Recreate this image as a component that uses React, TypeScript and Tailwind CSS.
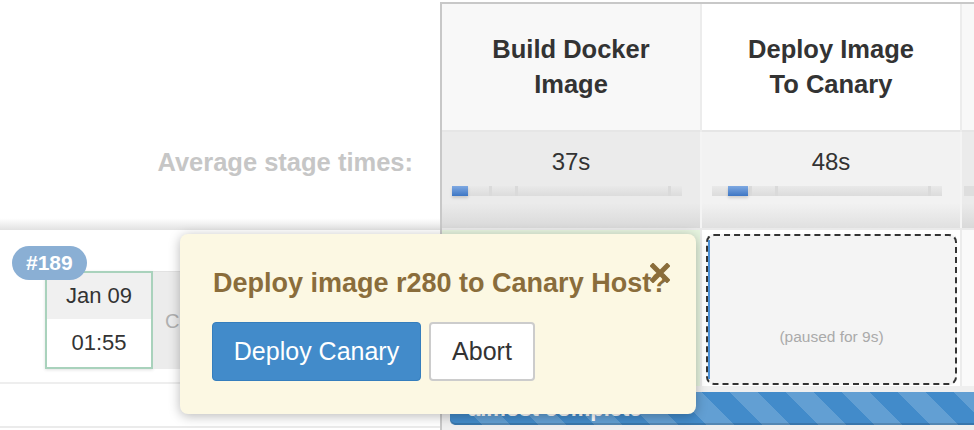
import React from "react";

function HeaderCell({ cls, children }: { cls: string; children: React.ReactNode }) {
  return (
    <div
      className={
        "h-full border-b-2 border-b-[#e6e6e6] flex items-center justify-center text-center font-bold text-[25.5px] leading-[35px] text-[#333] " +
        cls
      }
    >
      <div>{children}</div>
    </div>
  );
}

function AvgBar({ blueLeft, blueWidth }: { blueLeft: number; blueWidth: number }) {
  return (
    <div className="relative mt-[10px] ml-[10px] w-[230px] h-[10px] bg-[linear-gradient(to_bottom,#e9e9e9,#dcdcdc)]">
      <div className="absolute top-0 bottom-0 left-[37px] w-[3px] bg-[#dadada]" />
      <div className="absolute top-0 bottom-0 left-[63px] w-[3px] bg-[#dadada]" />
      <div className="absolute top-0 bottom-0 left-[216px] w-[3px] bg-[#dadada]" />
      <div
        className="absolute top-0 bottom-0 bg-[linear-gradient(to_bottom,#7fa9e2,#3d76c4)] shadow-[0_2px_3px_rgba(0,0,0,0.15)]"
        style={{ left: blueLeft, width: blueWidth }}
      />
    </div>
  );
}

export default function App() {
  return (
    <div className="relative w-[974px] h-[430px] overflow-hidden bg-white font-['Liberation_Sans',Arial,sans-serif] text-[#333]">
      <div className="flex h-[430px]">
        {/* Left panel */}
        <div className="w-[440px] flex flex-col">
          <div className="h-[132px]" />
          <div className="h-[98px] bg-[linear-gradient(to_bottom,#ffffff_88%,#e2e2e2)] flex justify-end pr-[27px] pt-[15px]">
            <span className="text-[25.5px] leading-[30px] font-bold text-[#c6c6c6]">Average stage times:</span>
          </div>
          <div className="relative h-[154px] border-b-2 border-[#eeeeee] pl-[45px] pt-[41px]">
            <div className="flex h-[98px]">
              <div className="w-[108px] h-[98px] border-2 border-[#a9d2bc] flex flex-col bg-white shadow-[0_1px_3px_rgba(0,0,0,0.12)]">
                <div className="h-[46px] bg-[#f0f0f0] flex items-center justify-center text-[22px] leading-[26px]">Jan 09</div>
                <div className="flex-1 flex items-center justify-center text-[22px] leading-[26px]">01:55</div>
              </div>
              <div className="flex-1 bg-[#ececec] border-t border-[#e2e2e2] flex items-center pl-[12px] text-[20px] text-[#b0b0b0]">
                Changes
              </div>
            </div>
            <div className="absolute left-[12px] top-[16px] h-[34px] px-[14px] rounded-full bg-[#8aafd4] text-white font-bold text-[21px] flex items-center">
              #189
            </div>
          </div>
          <div className="h-[44px] border-b-2 border-[#ebebeb]" />
        </div>

        {/* Right panel (stage table) */}
        <div className="flex-1 mt-[2px] border-t-2 border-l-2 border-[#c8c8c8] flex flex-col">
          <div className="flex h-[128px]">
            <div className="w-[260px] border-r-2 border-[#ececec]">
              <HeaderCell cls="bg-[#f8f8f8]">
                Build Docker
                <br />
                Image
              </HeaderCell>
            </div>
            <div className="w-[260px] border-r-2 border-[#ececec]">
              <HeaderCell cls="bg-white">
                Deploy Image
                <br />
                To Canary
              </HeaderCell>
            </div>
            <div className="flex-1">
              <HeaderCell cls="bg-[#f8f8f8]">&nbsp;</HeaderCell>
            </div>
          </div>

          <div className="flex h-[96px]">
            <div className="w-[260px] border-r-2 border-[#f4f4f4] bg-[linear-gradient(to_bottom,#ebebeb_74%,#d9d9d9)] pt-[16px]">
              <div className="text-center text-[24px] leading-[28px]">37s</div>
              <AvgBar blueLeft={0} blueWidth={16} />
            </div>
            <div className="w-[260px] border-r-2 border-[#f4f4f4] bg-[linear-gradient(to_bottom,#f2f2f2_74%,#e0e0e0)] pt-[16px]">
              <div className="text-center text-[24px] leading-[28px]">48s</div>
              <AvgBar blueLeft={16} blueWidth={20} />
            </div>
            <div className="flex-1 bg-[linear-gradient(to_bottom,#ebebeb_74%,#d9d9d9)] pt-[54px] pl-[2px]">
              <div className="h-[10px] bg-[#dedede]" />
            </div>
          </div>

          <div className="flex h-[158px] border-t-2 border-[#eaeaea]">
            <div className="w-[260px] border-r-2 border-[#ececec] bg-[#e6f4df]" />
            <div className="w-[260px] border-r-2 border-[#ececec] bg-white pl-[4px] pr-[3px] pt-[4px] pb-[1px]">
              <div className="relative h-full border-2 border-dashed border-[#333] rounded-[8px] bg-[#f4f4f4] flex flex-col items-center pt-[92px]">
                <div className="absolute left-0 top-[4px] bottom-[4px] w-[2px] bg-[#4a8fd6]" />
                <span className="text-[15.5px] leading-[18px] text-[#aaaaaa]">(paused for 9s)</span>
              </div>
            </div>
            <div className="flex-1 bg-[#fafafa]" />
          </div>

          <div className="h-[44px] bg-[#efefef] pt-[6px] pl-[8px]">
            <div className="h-[33px] rounded-l-[5px] bg-[#428bca] bg-[linear-gradient(45deg,rgba(255,255,255,.17)_25%,transparent_25%,transparent_50%,rgba(255,255,255,.17)_50%,rgba(255,255,255,.17)_75%,transparent_75%,transparent)] bg-[length:56px_56px] shadow-[inset_0_-2px_0_rgba(0,0,0,0.15)] pl-[18px] text-white font-bold text-[22px] leading-[33px]">
              almost complete
            </div>
          </div>
        </div>
      </div>

      {/* Input popup */}
      <div className="absolute left-[180px] top-[234px] w-[516px] h-[180px] rounded-[8px] bg-[#fcf8e3] shadow-[0_2px_12px_rgba(0,0,0,0.28)] pl-[32px] pt-[34px]">
        <div className="pl-[1px] text-[27px] leading-[30px] font-bold text-[#8a6d3b] whitespace-nowrap">
          Deploy image r280 to Canary Host?
        </div>
        <svg
          className="absolute left-[470px] top-[29px]"
          width="20"
          height="20"
          viewBox="0 0 20 20"
        >
          <path d="M3 3 L17 17 M17 3 L3 17" stroke="#8a6d3b" strokeWidth="5" strokeLinecap="square" />
        </svg>
        <div className="flex gap-[8px] mt-[24px]">
          <button className="h-[59px] w-[209px] rounded-[4px] bg-[#428bca] border border-[#357ebd] text-white text-[25px] flex items-center justify-center">
            Deploy Canary
          </button>
          <button className="h-[59px] w-[106px] rounded-[4px] bg-white border-2 border-[#cccccc] text-[#333] text-[25px] flex items-center justify-center">
            Abort
          </button>
        </div>
      </div>
    </div>
  );
}
